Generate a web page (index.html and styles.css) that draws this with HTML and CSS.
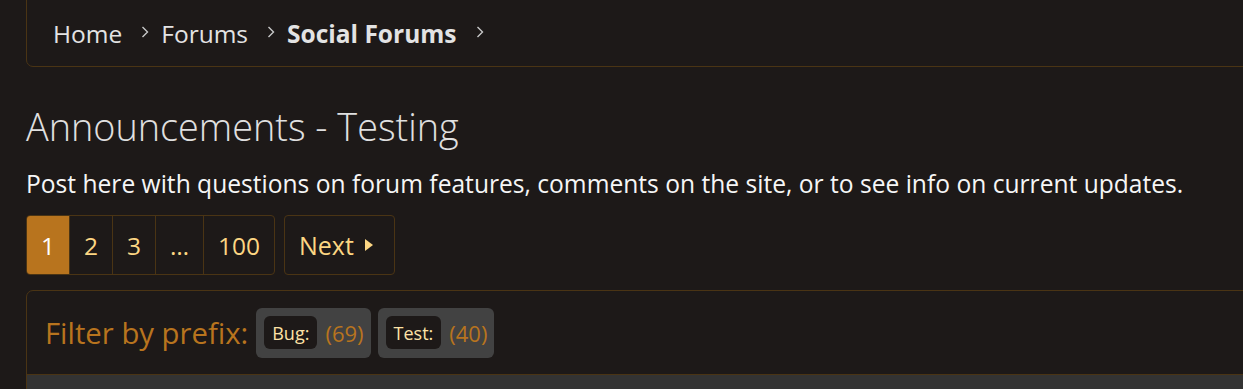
FILE: index.html
```html
<!DOCTYPE html>
<html lang="en">
<head>
<meta charset="utf-8">
<title>Announcements - Testing</title>
<link rel="stylesheet" href="styles.css">
</head>
<body>
<div class="page">
  <nav class="crumbs">
    <a class="crumb">Home</a><svg class="sep" viewBox="0 0 8 12" width="8" height="12"><polyline points="1.5,1 6.5,6 1.5,11"/></svg>
    <a class="crumb">Forums</a><svg class="sep" viewBox="0 0 8 12" width="8" height="12"><polyline points="1.5,1 6.5,6 1.5,11"/></svg>
    <a class="crumb crumb-bold">Social Forums</a><svg class="sep" viewBox="0 0 8 12" width="8" height="12"><polyline points="1.5,1 6.5,6 1.5,11"/></svg>
  </nav>

  <h1 class="title">Announcements - Testing</h1>
  <p class="desc">Post here with questions on forum features, comments on the site, or to see info on current updates.</p>

  <div class="pager">
    <div class="pages">
      <a class="pg pg-active">1</a>
      <a class="pg">2</a>
      <a class="pg">3</a>
      <a class="pg pg-gap">…</a>
      <a class="pg pg-last">100</a>
    </div>
    <a class="next">Next <span class="tri"></span></a>
  </div>

  <section class="block">
    <div class="filter">
      <span class="filter-label">Filter by prefix:</span>
      <span class="chip"><span class="tag">Bug:</span><span class="count">(69)</span></span>
      <span class="chip"><span class="tag">Test:</span><span class="count">(40)</span></span>
    </div>
    <div class="block-body"></div>
  </section>
</div>
</body>
</html>
```

FILE: styles.css
```css
html, body {
  margin: 0;
  padding: 0;
  background: #1d1918;
  overflow: hidden;
}
body {
  font-family: "Open Sans", "Noto Sans", sans-serif;
  color: #e6e6e6;
}
.page {
  padding-left: 26px;
  width: 1300px;
}
.crumbs {
  margin-top: -10px;
  height: 77px;
  box-sizing: border-box;
  border: 1px solid #4a3414;
  border-radius: 7px;
  display: flex;
  align-items: center;
  padding: 10px 0 0 26px;
  font-size: 24.5px;
  color: #e3e3e3;
}
.crumb { color: #e3e3e3; }
.crumb-bold { font-weight: 700; }
.sep {
  margin: 0 12px 0 19px;
  fill: none;
  stroke: #c8c8c8;
  stroke-width: 1.4;
  position: relative;
  top: -2px;
}
.title {
  margin: 35px 0 0;
  font-size: 37.8px;
  font-weight: 300;
  line-height: 50px;
  color: #e0e0e0;
}
.desc {
  margin: 17px 0 0;
  font-size: 24.6px;
  line-height: 30px;
  color: #f6f6f6;
}
.pager {
  margin-top: 16px;
  display: flex;
  gap: 9px;
  height: 60px;
}
.pages {
  display: flex;
  border: 1px solid #4a3414;
  border-radius: 4px;
  overflow: hidden;
}
.pg {
  display: flex;
  align-items: center;
  justify-content: center;
  width: 42px;
  font-size: 24.5px;
  color: #fcd683;
  border-left: 1px solid #4a3414;
}
.pg:first-child { border-left: none; }
.pg-active {
  background: #b8741e;
  color: #ffffff;
}
.pg-gap { width: 47px; }
.pg-last { width: 70px; }
.next {
  display: flex;
  align-items: center;
  gap: 11px;
  width: 111px;
  box-sizing: border-box;
  padding: 0 0 0 14px;
  border: 1px solid #4a3414;
  border-radius: 4px;
  font-size: 25px;
  color: #fcd683;
}
.tri {
  width: 0;
  height: 0;
  border-top: 6px solid transparent;
  border-bottom: 6px solid transparent;
  border-left: 8px solid #fcd683;
}
.block {
  margin-top: 15px;
  border: 1px solid #4a3414;
  border-radius: 7px 7px 0 0;
}
.filter {
  display: flex;
  align-items: center;
  gap: 7px;
  height: 83px;
  padding-left: 18px;
  border-bottom: 1px solid #4a3414;
}
.filter-label {
  font-size: 29.3px;
  color: #b8741e;
  margin-right: 1px;
}
.chip {
  display: flex;
  align-items: center;
  gap: 8px;
  height: 50px;
  padding: 0 7px 0 8px;
  background: #424242;
  border-radius: 6px;
}
.tag {
  display: flex;
  align-items: center;
  height: 33px;
  padding: 0 8px;
  background: #1d1918;
  border-radius: 6px;
  font-size: 18px;
  color: #fde2a6;
}
.count {
  font-size: 22px;
  color: #b8741e;
}
.block-body {
  height: 40px;
  background: #333333;
}
```
